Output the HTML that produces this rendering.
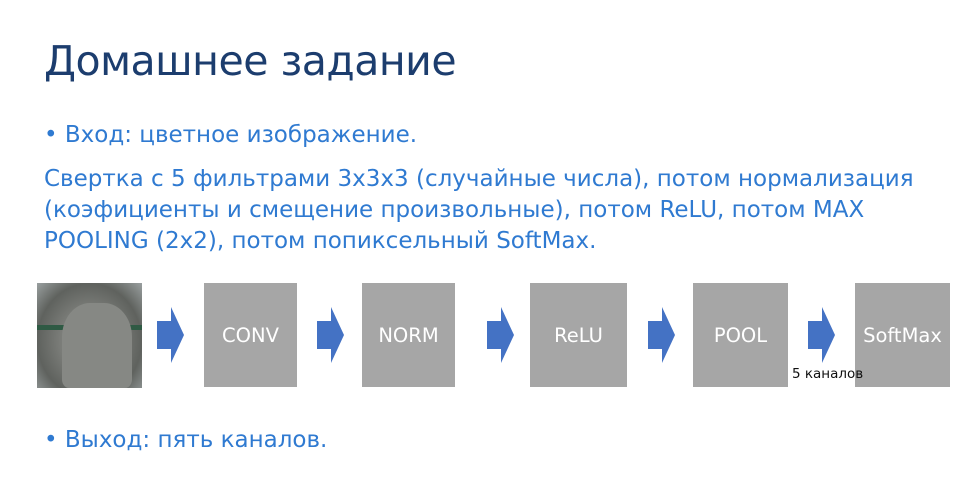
<!DOCTYPE html>
<html><head><meta charset="utf-8"><style>
body{margin:0;width:980px;height:478px;background:#fff;position:relative;overflow:hidden;font-family:"DejaVu Sans","Liberation Sans",sans-serif}
.t{position:absolute;white-space:nowrap}
h1{position:absolute;left:44px;top:37px;margin:0;font-weight:normal;font-size:41px;color:#1c3d6e;letter-spacing:-0.5px}
.b{color:#2f7ad1;font-size:23px;letter-spacing:0}
.box{position:absolute;top:283px;height:104px;background:#a6a6a6;color:#fff;font-size:19.5px;display:flex;align-items:center;justify-content:center}
.ar{position:absolute;top:307px}
</style></head><body>
<h1>Домашнее задание</h1>
<div class="t b" style="left:44px;top:122px">• Вход: цветное изображение.</div>
<div class="t b" style="left:44px;top:164px;line-height:31px">Свертка с 5 фильтрами 3x3x3 (случайные числа), потом нормализация<br>(коэфициенты и смещение произвольные), потом ReLU, потом MAX<br>POOLING (2x2), потом попиксельный SoftMax.</div>
<div style="position:absolute;left:37px;top:283px;width:105px;height:105px;background:radial-gradient(ellipse at 50% 55%,#8f9190 0%,#7a7c78 40%,#5f625e 70%,#9aa0a0 100%)"><div style="position:absolute;left:0;top:42px;width:105px;height:5px;background:#2f5a44"></div><div style="position:absolute;left:25px;top:20px;width:70px;height:85px;background:#868884;border-radius:40% 40% 10% 10%"></div></div>
<div class="box" style="left:204px;width:93px">CONV</div>
<div class="box" style="left:362px;width:93px">NORM</div>
<div class="box" style="left:530px;width:97px">ReLU</div>
<div class="box" style="left:693px;width:95px">POOL</div>
<div class="box" style="left:855px;width:95px">SoftMax</div>
<svg class="ar" style="left:157px" width="28" height="56"><path d="M0 14H14V0L27 28L14 56V42H0Z" fill="#4472c4"/></svg>
<svg class="ar" style="left:317px" width="28" height="56"><path d="M0 14H14V0L27 28L14 56V42H0Z" fill="#4472c4"/></svg>
<svg class="ar" style="left:487px" width="28" height="56"><path d="M0 14H14V0L27 28L14 56V42H0Z" fill="#4472c4"/></svg>
<svg class="ar" style="left:648px" width="28" height="56"><path d="M0 14H14V0L27 28L14 56V42H0Z" fill="#4472c4"/></svg>
<svg class="ar" style="left:808px" width="28" height="56"><path d="M0 14H14V0L27 28L14 56V42H0Z" fill="#4472c4"/></svg>
<div class="t" style="left:792px;top:366px;font-size:13.5px;color:#111">5 каналов</div>
<div class="t b" style="left:44px;top:427px">• Выход: пять каналов.</div>
</body></html>
